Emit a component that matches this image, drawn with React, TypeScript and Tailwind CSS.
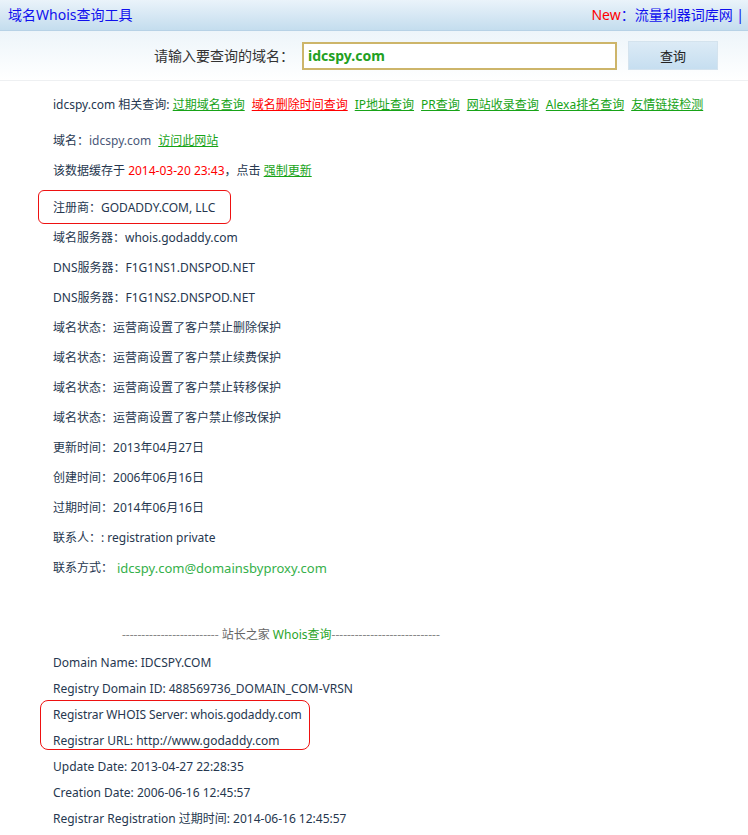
const links: { label: string; red?: boolean }[] = [
  { label: '过期域名查询' },
  { label: '域名删除时间查询', red: true },
  { label: 'IP地址查询' },
  { label: 'PR查询' },
  { label: '网站收录查询' },
  { label: 'Alexa排名查询' },
  { label: '友情链接检测' },
];

const infoRows: [string, string][] = [
  ['域名服务器：', 'whois.godaddy.com'],
  ['DNS服务器：', 'F1G1NS1.DNSPOD.NET'],
  ['DNS服务器：', 'F1G1NS2.DNSPOD.NET'],
  ['域名状态：', '运营商设置了客户禁止删除保护'],
  ['域名状态：', '运营商设置了客户禁止续费保护'],
  ['域名状态：', '运营商设置了客户禁止转移保护'],
  ['域名状态：', '运营商设置了客户禁止修改保护'],
  ['更新时间：', '2013年04月27日'],
  ['创建时间：', '2006年06月16日'],
  ['过期时间：', '2014年06月16日'],
  ['联系人：', ': registration private'],
];

const rawRows = [
  'Update Date: 2013-04-27 22:28:35',
  'Creation Date: 2006-06-16 12:45:57',
  'Registrar Registration 过期时间: 2014-06-16 12:45:57',
];

const font = "font-['Noto_Sans','Noto_Sans_CJK_SC',sans-serif]";

export default function App() {
  return (
    <div className={`min-h-[835px] bg-white text-[12px] leading-[16px] text-[#26374f] ${font}`}>
      {/* top bar */}
      <div className="h-[31px] flex items-center justify-between pl-2 pr-1 bg-gradient-to-b from-[#eaf3fa] to-[#c4ddee] border-b border-[#b7d2e6]">
        <span className="text-[14px] text-[#1010ee]">域名Whois查询工具</span>
        <span className="text-[14px]">
          <span className="text-[#ff0000]">New</span>
          <span className="text-[#1010ee]">：流量利器词库网 |</span>
        </span>
      </div>

      {/* search */}
      <div className="h-[50px] flex items-center bg-gradient-to-b from-[#edf5fa] to-white border-b border-[#eef0f2]">
        <span className="w-[294px] text-right text-[14px] text-[#333]">请输入要查询的域名：</span>
        <div className="ml-[8px] w-[315px] h-[28px] border-2 border-[#cdb56a] bg-white flex items-center px-[4px] text-[14px] font-bold text-[#22a022]">
          idcspy.com
        </div>
        <button className="ml-[11px] w-[90px] h-[29px] bg-gradient-to-b from-[#dcebf6] to-[#c6def0] border border-[#d4e3ee] text-[13px] text-[#222]">
          查询
        </button>
      </div>

      <div className="pl-[53px] pt-[9px]">
        <div className="h-[30px] flex items-center">
          <span>idcspy.com 相关查询:&nbsp;</span>
          {links.map((l) => (
            <a
              key={l.label}
              className={`underline mr-[7px] ${l.red ? 'text-[#ff0000]' : 'text-[#17a317]'}`}
            >
              {l.label}
            </a>
          ))}
        </div>

        <div className="h-[30px] mt-[6px] flex items-center">
          域名：<span className="text-[#4a5878]">idcspy.com</span>
          <a className="ml-[7px] underline text-[#17a317]">访问此网站</a>
        </div>
        <div className="h-[30px] flex items-center">
          该数据缓存于&nbsp;<span className="text-[#ff0000]">2014-03-20 23:43</span>，点击&nbsp;
          <a className="underline text-[#17a317]">强制更新</a>
        </div>

        <div className="relative h-[30px] mt-[7px] flex items-center">
          <span className="absolute left-[-15px] top-[-3px] w-[193px] h-[34px] rounded-[6px] border border-[#ee1111]" />
          注册商：GODADDY.COM, LLC
        </div>

        {infoRows.map(([k, v], i) => (
          <div key={i} className="h-[30px] flex items-center">
            {k}
            {v}
          </div>
        ))}
        <div className="h-[30px] flex items-center">
          联系方式：
          <span className="ml-[4px] text-[13px] text-[#35b04a]">idcspy.com@domainsbyproxy.com</span>
        </div>

        <div className="h-[37px]" />
        <div className="h-[30px] flex items-center pl-[69px] text-[#666]">
          <span className="text-[#888]">-------------------------</span>
          <span>&nbsp;站长之家&nbsp;</span>
          <span className="text-[#2aa52a]">Whois查询</span>
          <span className="text-[#888]">----------------------------</span>
        </div>

        <div className="h-[26px] flex items-center">Domain Name: IDCSPY.COM</div>
        <div className="h-[26px] flex items-center">Registry Domain ID: 488569736_DOMAIN_COM-VRSN</div>
        <div className="relative">
          <span className="absolute left-[-13px] top-[-2px] w-[270px] h-[50px] rounded-[8px] border border-[#ee1111]" />
          <div className="h-[26px] flex items-center tracking-[-0.1px]">Registrar WHOIS Server: whois.godaddy.com</div>
          <div className="h-[26px] flex items-center">Registrar URL: http://www.godaddy.com</div>
        </div>
        {rawRows.map((r) => (
          <div key={r} className="h-[26px] flex items-center">
            {r}
          </div>
        ))}
      </div>
    </div>
  );
}
